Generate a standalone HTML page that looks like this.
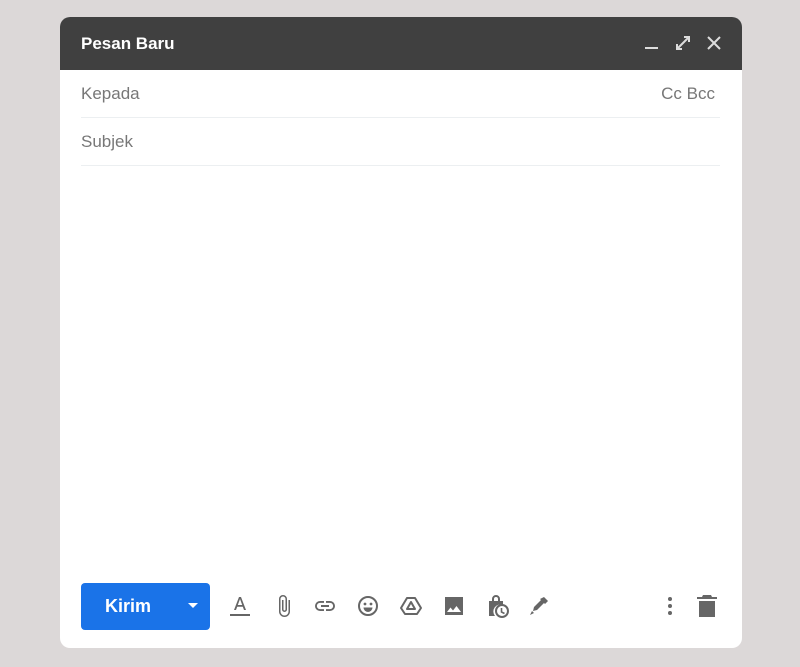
<!DOCTYPE html>
<html><head><meta charset="utf-8"><style>
body{margin:0;width:800px;height:667px;background:#dcd8d8;font-family:"Liberation Sans",Arial,sans-serif;position:relative;overflow:hidden}
.card{position:absolute;left:60px;top:17px;width:682px;height:631px;background:#fff;border-radius:10px;overflow:hidden}
.hd{height:53px;background:#404040;color:#fff;font-weight:bold;font-size:17px;line-height:53px;padding-left:21px;position:relative}
.row{position:absolute;left:21px;right:22px;height:47px;border-bottom:1px solid #eceff1;color:#777;font-size:17px;line-height:47px}
.btn{position:absolute;left:21px;top:566px;width:129px;height:47px;background:#1a73e8;border-radius:4px;color:#fff;font-weight:bold;font-size:18px}
svg.i{position:absolute;fill:#666}
</style></head><body>
<div class="card">
<div class="hd">Pesan Baru
<svg style="position:absolute;left:584px;top:17px" width="18" height="18" viewBox="0 0 18 18"><rect x="1" y="13" width="13" height="2" fill="#ddd"/></svg>
<svg style="position:absolute;left:614px;top:17px" width="18" height="18" viewBox="0 0 18 18"><path d="M3 15L15 3M10 3h5v5M3 10v5h5" stroke="#ddd" stroke-width="2" fill="none"/></svg>
<svg style="position:absolute;left:646px;top:18px" width="16" height="16" viewBox="0 0 16 16"><path d="M2 2L14 14M14 2L2 14" stroke="#ddd" stroke-width="2"/></svg>
</div>
<div class="row" style="top:53px">Kepada<span style="position:absolute;right:5px">Cc Bcc</span></div>
<div class="row" style="top:101px">Subjek</div>
<div class="btn"><span style="position:absolute;left:24px;top:13px">Kirim</span>
<svg style="position:absolute;left:107px;top:20px" width="10" height="6"><path d="M0 0h10L5 5z" fill="#fff"/></svg></div>
<svg class="i" style="left:168px;top:577px" width="24" height="24" viewBox="0 0 24 24"><path d="M11 3h2l5 13h-2l-1.2-3.3H9.2L8 16H6zM9.8 11h4.4L12 5z"/><rect x="2" y="20" width="20" height="2"/></svg>
<svg class="i" style="left:212px;top:577px" width="24" height="24" viewBox="0 0 24 24"><path d="M16.5 6v11.5a4 4 0 0 1-8 0V5a2.5 2.5 0 0 1 5 0v10.5a1 1 0 0 1-2 0V6H10v9.5a2.5 2.5 0 0 0 5 0V5a4 4 0 0 0-8 0v12.5a5.5 5.5 0 0 0 11 0V6z"/></svg>
<svg class="i" style="left:253px;top:577px" width="24" height="24" viewBox="0 0 24 24"><path d="M3.9 12c0-1.7 1.4-3.1 3.1-3.1h4V7H7a5 5 0 0 0 0 10h4v-1.9H7c-1.7 0-3.1-1.4-3.1-3.1zM8 13h8v-2H8zm9-6h-4v1.9h4c1.7 0 3.1 1.4 3.1 3.1s-1.4 3.1-3.1 3.1h-4V17h4a5 5 0 0 0 0-10z"/></svg>
<svg class="i" style="left:296px;top:577px" width="24" height="24" viewBox="0 0 24 24"><circle cx="12" cy="12" r="9" fill="none" stroke="#666" stroke-width="2"/><circle cx="9" cy="10" r="1.4"/><circle cx="15" cy="10" r="1.4"/><path d="M7.5 13.5h9a4.5 4.5 0 0 1-9 0z"/></svg>
<svg class="i" style="left:339px;top:577px" width="24" height="24" viewBox="0 0 24 24"><path d="M8 4h8l6 10-4 6H6l-4-6zM12 8l-4 7h8z" fill="none" stroke="#666" stroke-width="2" stroke-linejoin="round"/></svg>
<svg class="i" style="left:382px;top:577px" width="24" height="24" viewBox="0 0 24 24"><path d="M3 3h18v18H3zM5 18h14l-4.5-6-3.5 4.5-2.5-3z"/></svg>
<svg class="i" style="left:424px;top:576px" width="26" height="26" viewBox="0 0 26 26"><path d="M5 8h3V6a4 4 0 0 1 8 0v2h3v4a7 7 0 0 0-8 11H5zM10 8h4V6a2 2 0 0 0-4 0z"/><circle cx="18" cy="18" r="6" fill="none" stroke="#666" stroke-width="2"/><path d="M17.5 15v4l3 1.5" stroke="#666" stroke-width="1.6" fill="none"/></svg>
<svg class="i" style="left:467px;top:577px" width="24" height="24" viewBox="0 0 24 24"><path d="M17 3l4 4-3 3-1-1-7 7-4 1 1-4 7-7-1-1zM5 17l-2 4 4-2z"/></svg>
<svg class="i" style="left:604px;top:578px" width="12" height="22"><circle cx="6" cy="4" r="2"/><circle cx="6" cy="11" r="2"/><circle cx="6" cy="18" r="2"/></svg>
<svg class="i" style="left:636px;top:576px" width="22" height="26" viewBox="0 0 22 26"><path d="M7 2h8l1 2h5v2H1V4h5zM3 8h16v16H3z"/></svg>
</div>
</body></html>
